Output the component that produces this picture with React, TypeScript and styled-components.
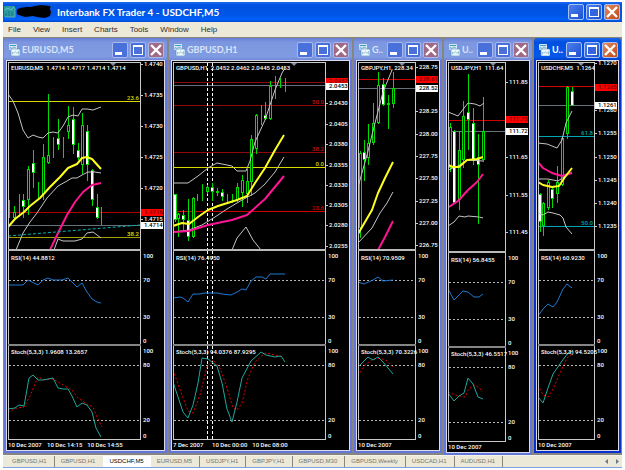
import React from "react";
import styled, { createGlobalStyle, css } from "styled-components";

const chartFont = `Roboto, "Liberation Sans", Arial, sans-serif`;
const uiFont = `"Liberation Sans", Arial, sans-serif`;
const captionFont = `Lato, "Open Sans", sans-serif`;

const GlobalStyle = createGlobalStyle`
  * { box-sizing: border-box; }
  html, body, #root { margin: 0; height: 100%; }
  body { background: #fefefe; font-family: ${uiFont}; }
  button { font: inherit; border: 0; padding: 0; background: none; color: inherit; }
`;

const Page = styled.div`
  display: flex;
  flex-direction: column;
  min-height: 100vh;
  padding: 2px 3px;
`;

const Caption = styled.header`
  display: flex;
  align-items: center;
  height: 20px;
  padding: 0 2px 0 1px;
  background: linear-gradient(#1d6cf0 0, #0053e1 15%, #0055e5 60%, #0061fc 88%, #0048c8 100%);
  color: #fff;
`;

const AppTitle = styled.h1`
  flex: 1;
  margin: 0;
  padding-left: 5px;
  font: 700 10px/18px ${captionFont};
  white-space: nowrap;
`;

const MenuBar = styled.nav`
  display: flex;
  align-items: center;
  gap: 12px;
  height: 15px;
  padding-left: 5px;
  background: #ece9d8;
  color: #302c2c;
  font-size: 8px;
  line-height: 14px;
`;

const Workspace = styled.main`
  display: grid;
  flex: 1;
  grid-template-columns: 163fr 183fr 88fr 88fr 87fr;
  gap: 2px;
  padding: 1px 1px 0;
  background: #87857f;
`;

const ChartWindow = styled.section<{ $active?: boolean; $tall?: boolean }>`
  display: flex;
  flex-direction: column;
  min-width: 0;
  margin-bottom: ${p => (p.$tall ? 0 : 2)}px;
  padding: 0 2px 2px;
  border-radius: 4px 4px 0 0;
  background: ${p => (p.$active ? "#0831cf" : "#6476d9")};
`;

const WindowCaption = styled.header<{ $active?: boolean }>`
  display: flex;
  align-items: center;
  gap: 2px;
  height: 22px;
  margin: 0 -2px;
  padding: 2px 3px 0 5px;
  border-radius: 4px 4px 0 0;
  color: ${p => (p.$active ? "#fff" : "#dbe4f8")};
  background: ${p =>
    p.$active
      ? "linear-gradient(#1c66e8 0, #0050e0 20%, #0458ec 85%, #0040c8 100%)"
      : "linear-gradient(#6a7fd6 0, #7c97df 20%, #7f9be2 85%, #7288d8 100%)"};
`;

const WindowTitle = styled.h2`
  flex: 1;
  min-width: 0;
  margin: 0;
  overflow: hidden;
  font: 700 9px/20px ${captionFont};
  white-space: nowrap;
`;

const CaptionButtons = styled.div`
  display: flex;
  gap: 2px;
`;

const CaptionButton = styled.button<{ $dim?: boolean; $close?: boolean }>`
  display: block;
  width: 16px;
  height: 16px;
  border: 1px solid ${p => (p.$dim ? "#a9b9ec" : "#a9c0f4")};
  border-radius: 2px;
  ${p =>
    p.$close
      ? css`
          background: ${p.$dim ? "#a06a86" : "linear-gradient(135deg, #e08a60, #c24a14)"};
        `
      : css`
          background: ${p.$dim ? "#4a70dc" : "linear-gradient(135deg, #4c80ee, #1f50d0)"};
        `}
  svg {
    display: block;
    width: 100%;
    height: 100%;
  }
`;

const ChartArea = styled.div`
  display: flex;
  flex: 1;
  flex-direction: column;
  padding: 1px 0 0 1px;
  border: 1px solid #d9dbe8;
  background: #000;
`;

const Pane = styled.div<{ $kind: "price" | "rsi" | "stoch" }>`
  display: grid;
  grid-template-columns: minmax(0, 1fr) 23px;
  grid-template-rows: minmax(0, 1fr);
  ${p => (p.$kind === "price" ? "flex: 1; min-height: 187px;" : "")}
  ${p => (p.$kind === "rsi" ? "height: 93px;" : "")}
  ${p => (p.$kind === "stoch" ? "height: 94px;" : "")}
`;

const Plot = styled.div<{ $edge?: "top" | "bottom" }>`
  position: relative;
  min-width: 0;
  border: 0 solid #c9c9c9;
  border-width: ${p => (p.$edge === "top" ? 1 : 0)}px 1px ${p => (p.$edge === "bottom" ? 1 : 0)}px 1px;
`;

const Drawing = styled.svg`
  position: absolute;
  inset: 0;
  width: 100%;
  height: 100%;
  overflow: hidden;
  font: 500 6px ${chartFont};
`;

const ScaleColumn = styled.svg`
  width: 23px;
  height: 100%;
  min-height: 0;
  overflow: visible;
  font: 500 6px ${chartFont};
`;

const Divider = styled.div<{ $dark?: boolean }>`
  height: 2px;
  margin-right: 23px;
  background: ${p => (p.$dark ? "#858585" : "#b9b9b9")};
`;

const PlotLabel = styled.p<{ $top: number }>`
  position: absolute;
  top: ${p => p.$top}px;
  left: 2px;
  margin: 0;
  color: #fff;
  font: 500 6px/8px ${chartFont};
  white-space: pre;
`;

const TimeAxis = styled.div`
  display: flex;
  gap: 5px;
  height: 10px;
  color: #fff;
  font: 500 6px/10px ${chartFont};
  white-space: nowrap;
  time { min-width: 34px; }
`;

const TabBar = styled.footer`
  display: flex;
  align-items: stretch;
  height: 13px;
  border-bottom: 1px solid #7ba2e7;
  border-top: 1px solid #f4f3ea;
  background: #ece9d8;
  color: #77756c;
  font: 6px/11px ${uiFont};
`;

const TabList = styled.div`
  display: flex;
  flex: 1;
  padding-left: 3px;
`;

const Tab = styled.button<{ $selected?: boolean; $plain?: boolean }>`
  padding: 0 7px 0 6px;
  border-right: 1px solid ${p => (p.$plain || p.$selected ? "transparent" : "#8a887c")};
  white-space: nowrap;
  ${p => p.$selected && "background: #fff; color: #000; padding: 0 6px 0 6px;"}
`;

const TabScroll = styled.div`
  display: flex;
  gap: 6px;
  padding-right: 3px;
  button { display: flex; align-items: center; }
`;

type Pt = [number, number];
type Series = { color: string; pts: Pt[]; width?: number; dash?: string };
/* x, high, low, body top, body bottom, filled */
type Candle = [number, number, number, number?, number?, boolean?];
type Level = { y: number; color: string; label?: string; ink?: string };
type Tick = { y: number; text: string; fill?: string; ink?: string };

interface ChartData {
  symbol: string;
  title: string;
  left: number;
  drop: number;
  quote: string;
  marker: number;
  levels: Level[];
  verticals?: number[];
  candles: Candle[];
  overlays: Series[];
  ticks: Tick[];
  rsi: string;
  rsiLine: Pt[];
  stoch: string;
  stochMain: Pt[];
  stochSignal: Pt[];
  dates: string[];
}

const WHITE = "#c4c4c4";
const YELLOW = "#ffff20";
const PINK = "#ff1493";
const RED = "#d00000";
const DARK_RED = "#900808";
const STEEL = "#66717e";
const CYAN = "#00a5b8";
const LIME = "#00dc00";

const line = (color: string, pts: Pt[], width = 1, dash?: string): Series => ({ color, pts, width, dash });

const charts: ChartData[] = [
  {
    symbol: "EURUSD,M5", title: "EURUSD,M5", left: 9, drop: 0, marker: 113,
    quote: "EURUSD,M5  1.4714 1.4717 1.4714 1.4714",
    levels: [
      { y: 101, color: "#d8d800", label: "23.6" }, { y: 212, color: "#b00000" },
      { y: 225, color: STEEL }, { y: 237, color: "#a0a000", label: "38.2", ink: "#e0e000" },
    ],
    candles: [
      [9, 200, 218], [14, 206, 219, 212, 218], [19, 194, 217], [23, 194, 218, 200, 207, true],
      [28, 166, 215, 169, 200], [33, 150, 188, 163, 173, true], [38, 182, 198], [43, 144, 200, 157, 194],
      [48, 94, 164, 155, 163], [53, 137, 158], [58, 119, 150, 138, 145, true], [63, 137, 158],
      [68, 106, 139, 125, 132], [73, 107, 154, 119, 145, true], [78, 143, 160, 150, 158, true],
      [82, 113, 174, 125, 165], [87, 125, 181, 131, 165, true], [92, 169, 206, 170, 200, true],
      [97, 194, 219, 207, 218, true], [101, 207, 225],
    ],
    overlays: [
      line(WHITE, [[8, 94], [13, 101], [18, 113], [23, 130], [28, 138], [33, 135], [38, 137], [43, 138], [48, 133], [53, 132], [58, 133], [63, 126], [68, 117], [73, 115], [78, 116], [82, 109], [87, 109], [93, 110], [101, 107]]),
      line(WHITE, [[16, 250], [23, 233], [30, 222], [37, 213], [47, 198], [58, 186], [67, 181], [72, 178], [77, 178], [82, 175], [88, 172], [95, 172], [101, 173]]),
      line(WHITE, [[54, 250], [58, 239], [63, 241], [75, 241], [82, 239], [87, 233], [93, 232], [101, 238]]),
      line(PINK, [[50, 250], [58, 233], [67, 215], [75, 202], [83, 192], [92, 185], [101, 183]], 2),
      line(YELLOW, [[8, 227], [15, 219], [24, 212], [30, 206], [40, 198], [50, 187], [60, 177], [68, 168], [77, 164], [82, 158], [87, 157], [92, 159], [101, 169]], 2),
      line("#00b4b4", [[8, 236], [140, 225]], 1, "3 2"),
    ],
    ticks: [
      { y: 64, text: "1.4740" }, { y: 95, text: "1.4735" }, { y: 126, text: "1.4730" }, { y: 157, text: "1.4725" },
      { y: 188, text: "1.4720" }, { y: 219, text: "1.4715" },
      { y: 212, text: "1.4716", fill: "#f00", ink: "#700" }, { y: 225, text: "1.4714", fill: "#fff", ink: "#000" },
    ],
    rsi: "RSI(14) 44.8812",
    rsiLine: [[8, 285], [23, 285], [28, 280], [38, 285], [43, 280], [48, 278], [53, 280], [62, 280], [68, 278], [73, 283], [77, 287], [82, 283], [87, 292], [92, 299], [97, 302], [101, 303]],
    stoch: "Stoch(5,3,3) 1.9608 13.2657",
    stochMain: [[8, 409], [15, 408], [19, 405], [24, 406], [29, 378], [33, 375], [38, 380], [43, 380], [53, 378], [58, 388], [63, 389], [68, 389], [72, 396], [77, 407], [82, 403], [87, 405], [92, 412], [96, 428], [101, 437]],
    stochSignal: [[8, 412], [17, 408], [24, 407], [30, 396], [38, 377], [45, 380], [53, 379], [63, 385], [72, 390], [78, 398], [87, 404], [93, 407], [97, 417], [102, 427]],
    dates: ["10 Dec 2007", "10 Dec 14:15", "10 Dec 14:55"],
  },
  {
    symbol: "GBPUSD,H1", title: "GBPUSD,H1", left: 174, drop: 0, marker: 294,
    quote: "GBPUSD,H1  2.0452 2.0462 2.0445 2.0453",
    levels: [
      { y: 82, color: DARK_RED }, { y: 85, color: STEEL },
      { y: 105, color: DARK_RED, label: "50.0", ink: "#c81010" },
      { y: 152, color: DARK_RED, label: "38.2", ink: "#c81010" },
      { y: 167, color: "#d8d800", label: "0.0" },
      { y: 211, color: RED, label: "23.6" },
    ],
    verticals: [207, 212],
    candles: [
      [175, 194, 222, 194, 220, true], [178, 213, 237, 214, 219], [183, 210, 230, 215, 220, true],
      [188, 199, 241, 220, 237, true], [193, 197, 238, 198, 237], [197, 194, 201], [202, 184, 201],
      [207, 185, 194, 187, 192], [212, 183, 201, 187, 192, true], [217, 188, 196, 191, 193],
      [222, 189, 201, 192, 197, true], [227, 194, 203], [232, 194, 203], [237, 183, 202, 187, 200],
      [242, 175, 207, 180, 193], [247, 169, 203, 181, 194], [251, 135, 196, 139, 182],
      [256, 114, 154, 115, 149], [261, 105, 125], [265, 102, 120, 115, 119, true],
      [270, 81, 120, 86, 119], [275, 76, 99], [280, 78, 88], [285, 78, 92],
    ],
    overlays: [
      line(WHITE, [[173, 183], [188, 183], [198, 176], [208, 168], [217, 163], [232, 166], [237, 171], [246, 171], [250, 161], [255, 142], [265, 120], [275, 90], [282, 73], [285, 68]]),
      line(WHITE, [[173, 232], [189, 230], [202, 225], [215, 217], [227, 209], [242, 200], [255, 193], [265, 184], [275, 172], [284, 157]]),
      line(WHITE, [[232, 250], [237, 238], [246, 227], [253, 240], [261, 250]]),
      line(PINK, [[173, 232], [189, 231], [208, 225], [232, 220], [247, 215], [265, 199], [284, 176]], 2),
      line(YELLOW, [[173, 226], [182, 223], [189, 224], [198, 217], [208, 210], [218, 206], [237, 200], [247, 196], [255, 183], [265, 168], [275, 150], [284, 135]], 2),
    ],
    ticks: [
      { y: 81, text: "2.0457", fill: "#f00", ink: "#700" },
      { y: 86, text: "2.0453", fill: "#fff", ink: "#000" },
      { y: 103, text: "2.0430" }, { y: 124, text: "2.0405" }, { y: 144, text: "2.0380" }, { y: 165, text: "2.0355" },
      { y: 185, text: "2.0330" }, { y: 205, text: "2.0305" }, { y: 225, text: "2.0280" }, { y: 246, text: "2.0255" },
    ],
    rsi: "RSI(14) 76.4950",
    rsiLine: [[173, 298], [180, 297], [183, 298], [188, 302], [193, 294], [200, 294], [205, 293], [217, 293], [222, 294], [231, 295], [237, 292], [242, 289], [246, 290], [251, 281], [256, 277], [262, 277], [266, 279], [270, 274], [285, 274]],
    stoch: "Stoch(5,3,3) 94.0376 87.9295",
    stochMain: [[173, 382], [183, 412], [188, 418], [193, 405], [198, 383], [202, 358], [208, 359], [217, 366], [222, 383], [227, 409], [232, 422], [237, 402], [242, 378], [251, 361], [261, 352], [266, 355], [275, 357], [281, 356], [285, 362]],
    stochSignal: [[173, 370], [182, 395], [188, 411], [193, 413], [200, 395], [207, 367], [213, 360], [220, 368], [227, 388], [233, 408], [237, 410], [242, 403], [248, 378], [255, 362], [265, 353], [275, 355], [283, 357]],
    dates: ["7 Dec 2007", "10 Dec 00:00", "10 Dec 08:00"],
  },
  {
    symbol: "GBPJPY,H1", title: "G..", left: 359, drop: 0, marker: 402,
    quote: "GBPJPY,H1, 228.34",
    levels: [{ y: 79, color: RED }, { y: 88, color: STEEL }],
    candles: [
      [360, 151, 238, 153, 228], [364, 140, 181, 152, 160, true], [368, 124, 165, 143, 158],
      [373, 103, 145, 123, 143], [378, 72, 124, 85, 123], [383, 78, 106, 84, 105, true],
      [388, 95, 129, 103, 105], [393, 72, 108, 88, 104],
    ],
    overlays: [
      line(WHITE, [[358, 187], [367, 155], [375, 123], [383, 92], [392, 70]]),
      line(WHITE, [[358, 243], [372, 228], [380, 213], [387, 203], [393, 192]]),
      line(PINK, [[378, 250], [385, 237], [393, 221]], 2),
      line(YELLOW, [[358, 234], [372, 210], [378, 193], [385, 178], [393, 162]], 2),
    ],
    ticks: [
      { y: 67, text: "228.75" }, { y: 79, text: "228.61", fill: "#f00", ink: "#700" },
      { y: 88, text: "228.52", fill: "#fff", ink: "#000" },
      { y: 111, text: "228.25" }, { y: 134, text: "228.00" }, { y: 156, text: "227.75" }, { y: 178, text: "227.50" },
      { y: 201, text: "227.25" }, { y: 223, text: "227.00" }, { y: 245, text: "226.75" },
    ],
    rsi: "RSI(14) 70.9509",
    rsiLine: [[358, 282], [364, 284], [373, 280], [378, 277], [383, 281], [393, 280]],
    stoch: "Stoch(5,3,3) 70.3226",
    stochMain: [[358, 367], [368, 357], [373, 360], [378, 357], [383, 362], [388, 368], [393, 374]],
    stochSignal: [[358, 376], [365, 365], [373, 359], [380, 358], [387, 361], [393, 367]],
    dates: ["10 Dec 2007"],
  },
  {
    symbol: "USDJPY,H1", title: "U..", left: 449, drop: 2, marker: 493,
    quote: "USDJPY,H1  111.64",
    levels: [{ y: 120, color: RED }, { y: 131, color: STEEL }],
    candles: [
      [450, 123, 172, 127, 168], [454, 130, 203, 131, 203, true], [459, 131, 210, 150, 200],
      [463, 101, 168, 116, 160], [468, 74, 150, 112, 120, true], [473, 108, 165, 123, 161, true],
      [478, 134, 224, 157, 165, true], [483, 97, 162, 131, 160],
    ],
    overlays: [
      line(WHITE, [[448, 112], [458, 116], [468, 103], [475, 104], [480, 106], [484, 103]]),
      line(WHITE, [[448, 170], [458, 166], [467, 160], [483, 161]]),
      line(WHITE, [[448, 226], [454, 222], [459, 216], [465, 217], [468, 216], [479, 217], [483, 218]]),
      line(PINK, [[449, 207], [458, 201], [468, 190], [477, 182], [483, 174]], 2),
      line(YELLOW, [[448, 165], [453, 167], [459, 167], [467, 160], [477, 159], [483, 157]], 2),
    ],
    ticks: [
      { y: 82, text: "111.85" }, { y: 119, text: "111.75", fill: "#f00", ink: "#700" },
      { y: 131, text: "111.72", fill: "#fff", ink: "#000" },
      { y: 157, text: "111.65" }, { y: 195, text: "111.55" }, { y: 232, text: "111.45" },
    ],
    rsi: "RSI(14) 56.8455",
    rsiLine: [[448, 289], [454, 300], [463, 291], [468, 292], [474, 297], [479, 297], [483, 294]],
    stoch: "Stoch(5,3,3) 46.5517",
    stochMain: [[448, 393], [454, 401], [459, 396], [464, 393], [468, 378], [473, 384], [478, 397], [483, 399]],
    stochSignal: [[448, 392], [455, 395], [465, 397], [468, 390], [474, 385], [479, 387], [482, 392]],
    dates: ["10 Dec 2007"],
  },
  {
    symbol: "USDCHF,M5", title: "U..", left: 539, drop: 0, marker: 581,
    quote: "USDCHF,M5  1.1264",
    levels: [
      { y: 86, color: RED }, { y: 105, color: STEEL },
      { y: 136, color: CYAN, label: "61.8" }, { y: 226, color: CYAN, label: "50.0" },
    ],
    candles: [
      [540, 193, 232, 194, 222, true], [543, 202, 236, 203, 226], [548, 180, 210, 182, 208],
      [552, 186, 208, 189, 199, true], [557, 166, 203, 182, 194], [562, 137, 186, 138, 185],
      [567, 86, 139, 87, 134], [572, 87, 106, 91, 106, true],
    ],
    overlays: [
      line(WHITE, [[538, 143], [547, 144], [557, 148], [562, 140], [566, 123], [572, 111]]),
      line(WHITE, [[538, 179], [548, 179], [558, 181], [567, 175], [572, 172]]),
      line(WHITE, [[538, 213], [543, 215], [548, 212], [553, 213], [560, 215], [563, 218], [566, 227], [572, 234]]),
      line(PINK, [[538, 162], [543, 168], [552, 173], [562, 176], [572, 173]], 2),
      line(YELLOW, [[538, 182], [543, 185], [552, 187], [559, 186], [565, 177], [572, 168]], 2),
    ],
    ticks: [
      { y: 63, text: "1.1270" }, { y: 87, text: "1.1265", fill: "#f00", ink: "#700" },
      { y: 110, text: "1.1260" }, { y: 105, text: "1.1261", fill: "#fff", ink: "#000" },
      { y: 133, text: "1.1255" }, { y: 157, text: "1.1250" }, { y: 180, text: "1.1245" },
      { y: 203, text: "1.1240" }, { y: 226, text: "1.1235" },
    ],
    rsi: "RSI(14) 60.9230",
    rsiLine: [[538, 316], [543, 309], [548, 304], [553, 307], [557, 302], [563, 289], [567, 284], [572, 288]],
    stoch: "Stoch(5,3,3) 94.5205",
    stochMain: [[538, 397], [543, 403], [548, 388], [553, 374], [562, 361], [568, 353], [573, 351]],
    stochSignal: [[538, 385], [543, 395], [548, 397], [553, 389], [560, 373], [567, 358], [572, 354]],
    dates: ["10 Dec 2007"],
  },
];

const RSI_TICKS: Tick[] = [{ y: 256, text: "100" }, { y: 280, text: "70" }, { y: 317, text: "30" }, { y: 341, text: "0" }];
const STOCH_TICKS: Tick[] = [{ y: 351, text: "100" }, { y: 365, text: "80" }, { y: 420, text: "20" }, { y: 436, text: "0" }];

const Curve = ({ color, pts, width = 1, dash }: Series) => (
  <polyline
    points={pts.map(p => p.join(",")).join(" ")}
    fill="none"
    stroke={color}
    strokeWidth={width}
    strokeDasharray={dash}
    strokeLinejoin="round"
  />
);

const CandleMark = ({ c: [x, high, low, top, bottom, filled] }: { c: Candle }) => (
  <g shapeRendering="crispEdges">
    <rect x={x} y={high} width={1} height={low - high} fill={LIME} />
    {top !== undefined && bottom !== undefined && (
      <>
        <rect x={x - 1} y={top} width={3} height={bottom - top} fill={LIME} />
        <rect
          x={filled ? x - 1 : x}
          y={top + 1}
          width={filled ? 2 : 1}
          height={Math.max(0, bottom - top - 2)}
          fill={filled ? "#fff" : "#000"}
        />
      </>
    )}
  </g>
);

const HorizontalDash = ({ y }: { y: number }) => (
  <line x1="0" x2="100%" y1={y} y2={y} stroke="#b4b4b4" strokeDasharray="2 2" shapeRendering="crispEdges" />
);

const VerticalDashes = ({ xs = [], left }: { xs?: number[]; left: number }) => (
  <>
    {xs.map(x => (
      <line key={x} x1={x - left} x2={x - left} y1="0" y2="100%" stroke="#fff" strokeDasharray="3 2" shapeRendering="crispEdges" />
    ))}
  </>
);

const Scale = ({ ticks, top, inset, marks }: { ticks: Tick[]; top: number; inset: number; marks?: boolean }) => (
  <ScaleColumn>
    {ticks.map(t => (
      <g key={t.text}>
        {t.fill && <rect x={0} y={t.y - top - 3} width={22} height={7} fill={t.fill} />}
        {marks && !t.fill && <rect x={0} y={t.y - top} width={2} height={1} fill="#c9c9c9" />}
        <text x={inset} y={t.y - top + 2} fill={t.ink ?? "#fff"}>{t.text}</text>
      </g>
    ))}
  </ScaleColumn>
);

const ChartIcon = () => (
  <svg width="11" height="12" viewBox="0 0 11 12" aria-hidden="true">
    <rect x="0" y="0" width="8" height="6" rx="1" fill="#d4e8f6" />
    <rect x="1" y="1" width="6" height="1" fill="#3aa0c0" />
    <path d="M1 5V3.500L3 4.500L5 3L7 4" stroke="#5a9cb8" strokeWidth=".7" fill="none" />
    <rect x="2" y="5" width="9" height="7" rx="1" fill="#f0f8fc" stroke="#4a8cc0" strokeWidth=".6" />
    <path d="M3.500 10.500V8L5 9.500L6.500 7.500L8 9.500L9.500 7.500V10.500" stroke="#6aaac0" strokeWidth=".6" fill="none" />
  </svg>
);

const AppIcon = () => (
  <svg width="12" height="12" viewBox="0 0 12 12" aria-hidden="true">
    <rect width="11" height="11" rx="1" fill="#2a9aa0" />
    <path d="M1 4L4 2L7 4L10 1" stroke="#6cc4bc" fill="none" />
    <path d="M2 10V7M5 10V5M8 10V6" stroke="#208890" strokeWidth="2" />
    <path d="M1 11H11V2" stroke="#58b0b8" fill="none" />
  </svg>
);

const Scribble = () => (
  <svg width="36" height="14" viewBox="0 0 36 14" aria-hidden="true">
    <path
      d="M4 3L10 2L15 2L19 1L25 0L34 1Q35 2 34 4L35 7L34 11L29 13L21 12L17 11L9 12L3 10Q0 9 1 7Q0 4 4 3Z"
      fill="#000"
    />
  </svg>
);

const WindowButtons = ({ dim, name }: { dim?: boolean; name: string }) => (
  <CaptionButtons>
    <CaptionButton $dim={dim} aria-label={`Minimize ${name}`}>
      <svg viewBox="0 0 14 14"><rect x="2" y="9" width="7" height="3" fill="#fff" /></svg>
    </CaptionButton>
    <CaptionButton $dim={dim} aria-label={`Maximize ${name}`}>
      <svg viewBox="0 0 14 14" shapeRendering="crispEdges">
        <rect x="2" y="2" width="10" height="10" fill="#fff" />
        <rect x="3" y="4" width="8" height="7" fill={dim ? "#4a70dc" : "#3464de"} />
      </svg>
    </CaptionButton>
    <CaptionButton $dim={dim} $close aria-label={`Close ${name}`}>
      <svg viewBox="0 0 14 14"><path d="M2 2L12 12M12 2L2 12" stroke="#fff" strokeWidth="2.400" /></svg>
    </CaptionButton>
  </CaptionButtons>
);

const Chart = ({ data, active }: { data: ChartData; active?: boolean }) => {
  const { left, drop } = data;
  const rsiTop = 251 + drop;
  const stochTop = 346 + drop;
  const shifted = (ticks: Tick[]) => ticks.map(t => ({ ...t, y: t.y + drop }));
  return (
    <ChartWindow $active={active} $tall={drop > 0} aria-label={data.symbol}>
      <WindowCaption $active={active}>
        <ChartIcon />
        <WindowTitle>{data.title}</WindowTitle>
        <WindowButtons dim={!active} name={data.symbol} />
      </WindowCaption>
      <ChartArea>
        <Pane $kind="price">
          <Plot $edge="top">
            <Drawing>
              {data.levels.map(l => (
                <g key={l.y}>
                  <rect x="0" y={l.y - 63} width="100%" height={1} fill={l.color} />
                  {l.label && <text x="100%" dx={-1} y={l.y - 64} textAnchor="end" fill={l.ink ?? l.color}>{l.label}</text>}
                </g>
              ))}
              <VerticalDashes xs={data.verticals} left={left} />
              <g transform={`translate(${-left} -63)`}>
                {data.candles.map(c => <CandleMark key={c[0]} c={c} />)}
                {data.overlays.map((s, i) => <Curve key={i} {...s} />)}
                <path d={`M${data.marker - 3} 63h6l-3 3z`} fill="#8090a4" />
              </g>
            </Drawing>
            <PlotLabel $top={1}>{data.quote}</PlotLabel>
          </Plot>
          <Scale ticks={data.ticks} top={62} inset={3} marks />
        </Pane>
        <Divider />
        <Pane $kind="rsi">
          <Plot>
            <Drawing>
              <HorizontalDash y={29} />
              <HorizontalDash y={66} />
              <VerticalDashes xs={data.verticals} left={left} />
              <g transform={`translate(${-left} ${-rsiTop})`}>
                <Curve color="#1e78d2" pts={data.rsiLine} />
              </g>
            </Drawing>
            <PlotLabel $top={3}>{data.rsi}</PlotLabel>
          </Plot>
          <Scale ticks={shifted(RSI_TICKS)} top={rsiTop} inset={2} />
        </Pane>
        <Divider $dark />
        <Pane $kind="stoch">
          <Plot $edge="bottom">
            <Drawing>
              <HorizontalDash y={19} />
              <HorizontalDash y={74} />
              <VerticalDashes xs={data.verticals} left={left} />
              <g transform={`translate(${-left} ${-stochTop})`}>
                <Curve color="#e00000" pts={data.stochSignal} dash="2 2" />
                <Curve color="#20a79c" pts={data.stochMain} />
              </g>
            </Drawing>
            <PlotLabel $top={2}>{data.stoch}</PlotLabel>
          </Plot>
          <Scale ticks={shifted(STOCH_TICKS)} top={stochTop} inset={2} />
        </Pane>
        <TimeAxis>
          {data.dates.map(d => <time key={d}>{d}</time>)}
        </TimeAxis>
      </ChartArea>
    </ChartWindow>
  );
};

const menus = ["File", "View", "Insert", "Charts", "Tools", "Window", "Help"];
const tabs = [
  "GBPUSD,H1", "GBPUSD,H1", "USDCHF,M5", "EURUSD,M5", "USDJPY,H1",
  "GBPJPY,H1", "GBPUSD,M30", "GBPUSD,Weekly", "USDCAD,H1", "AUDUSD,H1",
];

export default function App() {
  return (
    <Page>
      <GlobalStyle />
      <Caption>
        <AppIcon />
        <Scribble />
        <AppTitle>Interbank FX Trader 4 - USDCHF,M5</AppTitle>
        <WindowButtons name="Interbank FX Trader 4" />
      </Caption>
      <MenuBar>
        {menus.map(m => <button key={m}>{m}</button>)}
      </MenuBar>
      <Workspace>
        {charts.map((c, i) => <Chart key={c.symbol} data={c} active={i === charts.length - 1} />)}
      </Workspace>
      <TabBar>
        <TabList role="tablist">
          {tabs.map((t, i) => (
            <Tab key={i} role="tab" aria-selected={i === 2} $selected={i === 2} $plain={i === 1}>{t}</Tab>
          ))}
        </TabList>
        <TabScroll>
          <button aria-label="Scroll tabs left">
            <svg width="4" height="5" viewBox="0 0 4 5"><path d="M3 0V5L0 2.500Z" fill="#6a7890" /></svg>
          </button>
          <button aria-label="Scroll tabs right">
            <svg width="4" height="5" viewBox="0 0 4 5"><path d="M1 0V5L4 2.500Z" fill="#6a7890" /></svg>
          </button>
        </TabScroll>
      </TabBar>
    </Page>
  );
}
